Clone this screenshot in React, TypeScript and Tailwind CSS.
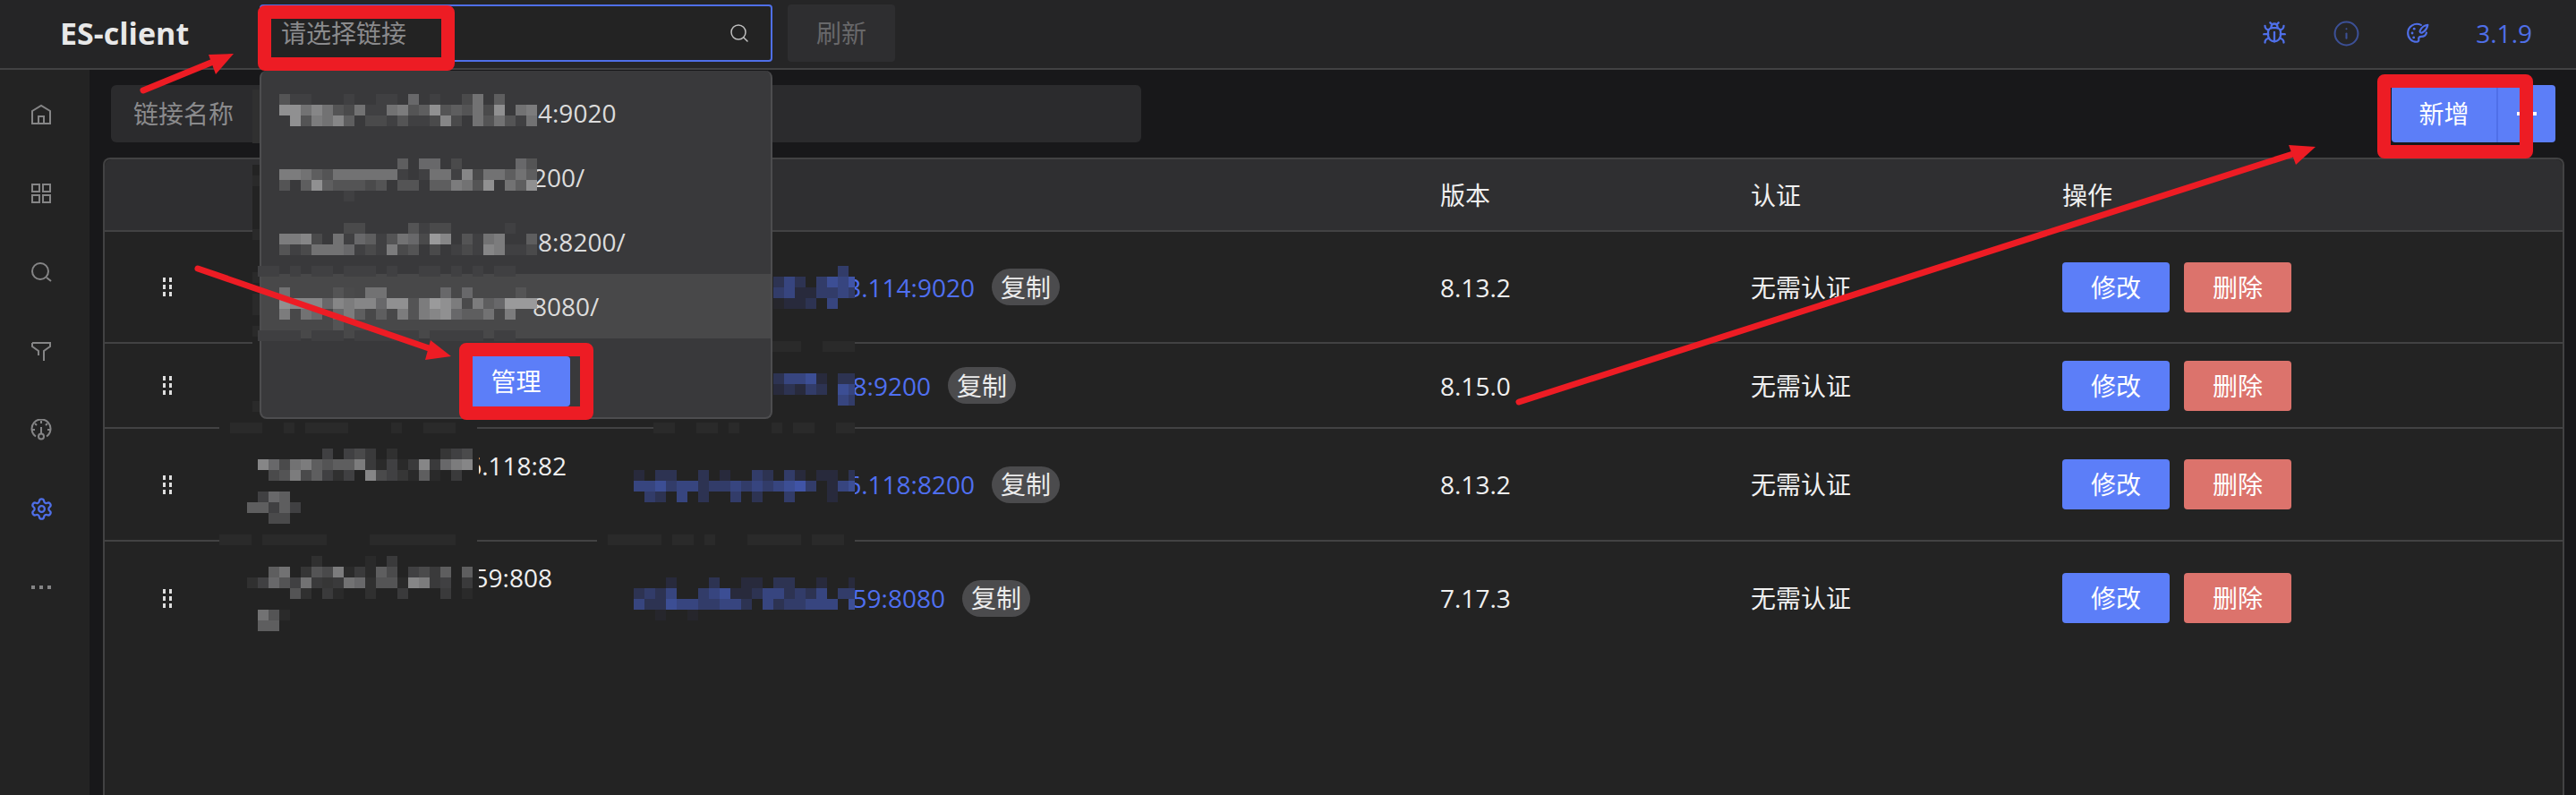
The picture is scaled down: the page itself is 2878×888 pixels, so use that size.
import { Bug, Info, Search, Settings } from "lucide-react";

const GRAYS: Record<string, string> = {
  "0": "#404042", "1": "#4a4a4b", "2": "#545455", "3": "#5e5e5f", "4": "#68686a",
  "5": "#727273", "6": "#7c7c7d", "7": "#868687", "8": "#909091", "9": "#9a9a9b",
  a: "#2a2a2a", b: "#303030", c: "#363636", d: "#3a3a3b", e: "#232323", f: "#3f3f41",
};
const BLUES: Record<string, string> = {
  a: "#26262c", "1": "#282a3c", "2": "#2d3352", "3": "#323c69", "4": "#37457f", "5": "#3c4e94", "6": "#4054a6",
};

type Patch = { x: number; y: number; rows: string[]; blue?: boolean; clip?: number };

// blurred bits that sit over the table
const TABLE_PATCHES: Patch[] = [
  { x: 282, y: 100, rows: ["b", "b", "b", "b", "b", "", "", "e", "a", "e", "e", "e", "e", "a", "e", "e", "e", "a", "e", "a", "a", "e", "a", "e", "e", "e", "e", "e", "e", "a", "e"] },
  { x: 245, y: 472, rows: ["eaaaeeaeaaaaeeeeaeeaaaee"] },
  { x: 730, y: 472, rows: ["aaeeaaeaeeeaeaaeeaa"], clip: 225 },
  { x: 245, y: 597, rows: ["aaaeaaaaaaeeeeaaaaaaaaee"] },
  { x: 667, y: 597, rows: ["eaaaaaeaaeaeeeaaaaaeaaae"], clip: 288 },
  { x: 859, y: 381, rows: ["aaaeeaaa"] },
  // row 1 url
  { x: 864, y: 297, clip: 91, rows: ["......3", "242.3546", "34113343", "a112.4"], blue: true },
  // row 2 url
  { x: 864, y: 417, clip: 91, rows: ["24451.22", "12132.54", "......43"], blue: true },
  // row 3 url
  { x: 708, y: 525, clip: 247, rows: ["1.22..2.1..32.31.11.2", "44534423343434563.145", ".32.4.2..3.2..3...1.."], blue: true },
  // row 4 url
  { x: 708, y: 645, clip: 247, rows: ["...1...2..11.22..1..1", "2324..345112442324.33", "42254433442.4233444.5", "..a..a"], blue: true },
  // row 3 name
  { x: 276, y: 501, rows: [".......0.01d.b....c01", ".7415632336da0ad7d467", "..126130b0.710ca3a.d.", "", ".043", "33030", "..11"] },
  // row 4 name
  { x: 276, y: 621, rows: ["......b....a.d", "..35.c216ada31.01d3.3", "b04205dcd54b22a76d0.d", "....2b.da..b..d...d.a", "", ".52a", ".33"] },
];

// blurred bits inside the open dropdown
const MENU_PATCHES: Patch[] = [
  { x: 312, y: 105, rows: ["200...0..00.4.0..15.3...", "885752150056238232518.56", ".826573.110200171.525205"] },
  { x: 312, y: 177, rows: ["...........3.44.1.....42", "665325555550.05507155353", "2.38322212.22.336528.538", "......0"] },
  { x: 312, y: 249, rows: ["......11....2011.....0..", "6671.50430254197.2056..3", "2015554010612.1.01076001"] },
  { x: 288, y: 297, rows: ["00.0.00.000.0..00.0.0.00."] },
  { x: 312, y: 321, rows: ["5....21.55.....4.4....2.", "877747677488269861634999", "6.54.463.3.626784335.6..", ".....2"] },
  { x: 288, y: 369, rows: ["ffff.fff.ffffff.fffff.ff"] },
];

const ROWS = [
  { h: "h-[125px]", url: "3.114:9020", urlW: "w-[134px]", version: "8.13.2" },
  { h: "h-[95px]", url: "8:9200", urlW: "w-[85px]", version: "8.15.0" },
  { h: "h-[126px]", url: "6.118:8200", urlW: "w-[134px]", version: "8.13.2", name: "6.118:82", nameW: "w-[98px]", namePad: "pt-[20px]" },
  { h: "h-[126px]", url: "59:8080", urlW: "w-[101px]", version: "7.17.3", name: "59:808", nameW: "w-[82px]", namePad: "pt-[19px]" },
];

const MENU_ITEMS = [
  { text: "4:9020", pad: "pl-[309px]" },
  { text: "200/", pad: "pl-[303px]" },
  { text: "8:8200/", pad: "pl-[309px]" },
  { text: "8080/", pad: "pl-[303px]", hover: true },
];

const GRID = "grid grid-cols-[171px_420px_901px_347px_348px_1fr]";

function Mosaic({ x, y, rows, blue, clip }: Patch) {
  const palette = blue ? BLUES : GRAYS;
  const w = clip ?? Math.max(...rows.map((r) => r.length)) * 12;
  return (
    <svg
      className="absolute"
      style={{ left: x, top: y }}
      width={w}
      height={rows.length * 12}
      shapeRendering="crispEdges"
    >
      {rows.map((row, j) =>
        row.split("").map((c, i) =>
          palette[c] ? <rect key={`${i}-${j}`} x={i * 12} y={j * 12} width={12} height={12} fill={palette[c]} /> : null,
        ),
      )}
    </svg>
  );
}

// text whose start is hidden under the blur
function Clipped({ text, width }: { text: string; width: string }) {
  return (
    <span className={`flex justify-end overflow-hidden ${width}`}>
      <span className="shrink-0">{text}</span>
    </span>
  );
}

function HomeIcon() {
  return (
    <svg width="24" height="24" viewBox="0 0 24 24" fill="none" stroke="currentColor" strokeWidth="2">
      <path d="M2 22V8l10-6 10 6v14H2Z" />
      <path d="M9 22v-8h6v8" />
    </svg>
  );
}

function GridIcon() {
  return (
    <svg width="24" height="24" viewBox="0 0 24 24" fill="none" stroke="currentColor" strokeWidth="2">
      <rect x="2" y="2" width="8" height="8" />
      <rect x="14" y="2" width="8" height="8" />
      <rect x="2" y="14" width="8" height="8" />
      <rect x="14" y="14" width="8" height="8" />
    </svg>
  );
}

function LensIcon() {
  return (
    <svg width="24" height="24" viewBox="0 0 24 24" fill="none" stroke="currentColor" strokeWidth="2">
      <circle cx="11" cy="11" r="9" />
      <path d="m18 18 5 4" />
    </svg>
  );
}

function FunnelIcon() {
  return (
    <svg width="24" height="24" viewBox="0 0 24 24" fill="none" stroke="currentColor" strokeWidth="2">
      <path d="M2 3h20v4l-7 5v11" />
      <path d="M2 3v4l7 5v5" />
    </svg>
  );
}

function GaugeIcon() {
  return (
    <svg width="24" height="24" viewBox="0 0 24 24" fill="none" stroke="currentColor" strokeWidth="2">
      <path d="M6 19.5a10.5 10.5 0 1 1 12 0" />
      <circle cx="12" cy="19.5" r="3" />
      <path d="M12 16.5V9M12 2v3M2 12h3M19 12h3M5 5l2 2M19 5l-2 2" />
    </svg>
  );
}

function BrushPalette() {
  return (
    <svg width="26" height="26" viewBox="0 0 24 24" fill="none" stroke="currentColor" strokeWidth="2" strokeLinecap="round" strokeLinejoin="round">
      <path d="M15.5 3.6A9.3 9.3 0 0 0 2 12c0 5 4 9 9 9 1.8 0 2.6-1.2 2.2-2.6-.5-1.6.6-2.8 2.4-2.8 2.6 0 5-1.4 5.6-4.1" />
      <path d="M22.5 3.5c-3.5.5-6.5 2.8-8 6-.6 1.4.8 2.7 2.2 2 3-1.5 5.2-4.5 5.8-8Z" />
      <circle cx="6.5" cy="12" r="1.3" fill="currentColor" stroke="none" />
      <circle cx="8.5" cy="7.5" r="1.3" fill="currentColor" stroke="none" />
      <circle cx="8" cy="16.5" r="1.3" fill="currentColor" stroke="none" />
    </svg>
  );
}

function Sidebar() {
  const items = [
    <HomeIcon key="home" />,
    <GridIcon key="grid" />,
    <LensIcon key="lens" />,
    <FunnelIcon key="funnel" />,
    <GaugeIcon key="gauge" />,
  ];
  return (
    <div className="w-[100px] shrink-0 bg-[#232323] pt-[6px] pr-[8px] text-[#858586]">
      {items.map((icon, i) => (
        <div key={i} className="flex h-[88px] items-center justify-center">
          {icon}
        </div>
      ))}
      <div className="flex h-[88px] items-center justify-center text-[#4f6fe8]">
        <Settings size={27} strokeWidth={2} />
      </div>
      <div className="flex h-[88px] items-center justify-center gap-[5px]">
        <span className="h-[4px] w-[4px] bg-[#858586]" />
        <span className="h-[4px] w-[4px] bg-[#858586]" />
        <span className="h-[4px] w-[4px] bg-[#858586]" />
      </div>
    </div>
  );
}

function Header() {
  return (
    <div className="flex h-[78px] shrink-0 items-center border-b-2 border-[#424243] bg-[#252526] pb-[2px]">
      <div className="w-[290px] shrink-0 pl-[67px] text-[34px] leading-none font-bold text-[#e8e8e8]">ES-client</div>
      <div className="flex h-[64px] w-[573px] items-center justify-between rounded-[4px] border-2 border-[#4f6fe8] bg-[#232323] pr-[23px] pl-[22px] text-[#8a8a8c]">
        <span>请选择链接</span>
        <Search size={24} strokeWidth={1.5} className="text-[#c0c0c0]" />
      </div>
      <div className="ml-[17px] flex h-[64px] w-[120px] items-center justify-center rounded-[4px] bg-[#2e2e30] text-[#68686a]">
        刷新
      </div>
      <div className="ml-auto flex items-center pr-[49px] text-[#4f6fe8]">
        <span className="flex w-[80px] justify-center">
          <Bug size={28} strokeWidth={2} />
        </span>
        <span className="flex w-[80px] justify-center text-[#3c5096]">
          <Info size={31} strokeWidth={1.6} />
        </span>
        <span className="flex w-[80px] justify-center">
          <BrushPalette />
        </span>
        <span className="ml-[25px]">3.1.9</span>
      </div>
    </div>
  );
}

function Toolbar() {
  return (
    <div className="flex justify-between pr-[10px] pl-[9px]">
      <div className="flex h-[64px] w-[1151px] items-center rounded-[6px] bg-[#2b2b2d] pl-[25px] text-[#8a8a8c]">
        链接名称
      </div>
      <div className="flex h-[64px] w-[183px] overflow-hidden rounded-[4px] bg-[#5c7ef8] text-white">
        <div className="flex w-[119px] items-center justify-center border-r-2 border-[#4f6fe8]">新增</div>
        <div className="flex flex-1 items-center justify-center gap-[5px]">
          <span className="h-[4px] w-[4px] bg-white" />
          <span className="h-[4px] w-[4px] bg-white" />
          <span className="h-[4px] w-[4px] bg-white" />
        </div>
      </div>
    </div>
  );
}

function DragHandle() {
  return (
    <div className="ml-[65px] grid w-[10px] grid-cols-2 justify-between gap-y-[3px]">
      {[0, 1, 2, 3, 4, 5].map((i) => (
        <span key={i} className={`h-[5px] w-[3px] bg-[#dedede] ${i % 2 ? "justify-self-end" : ""}`} />
      ))}
    </div>
  );
}

function Table() {
  return (
    <div className="mt-[17px] flex-1 rounded-t-[8px] border-x-2 border-t-2 border-[#424243] bg-[#232323] text-[#f0f0f0]">
      <div className={`${GRID} h-[81px] items-center rounded-t-[8px] border-b-2 border-[#424243] bg-[#2f2f31]`}>
        <div />
        <div />
        <div />
        <div>版本</div>
        <div>认证</div>
        <div>操作</div>
      </div>
      {ROWS.map((row, i) => (
        <div key={i} className={`${GRID} ${row.h} items-center ${i < 3 ? "border-b-2 border-[#424243]" : ""}`}>
          <DragHandle />
          <div className={`self-start pl-[247px] ${row.namePad ?? ""}`}>
            {row.name && <Clipped text={row.name} width={row.nameW ?? ""} />}
          </div>
          <div className="flex items-center pl-[247px] text-[#4f6ff0]">
            <Clipped text={row.url} width={row.urlW} />
            <span className="ml-[19px] flex h-[41px] w-[76px] items-center justify-center rounded-full bg-[#4b4b4d] text-[#ececec]">
              复制
            </span>
          </div>
          <div>{row.version}</div>
          <div>无需认证</div>
          <div className="flex gap-[16px] text-white">
            <button className="h-[56px] w-[120px] rounded-[4px] bg-[#5c7ef8]">修改</button>
            <button className="h-[56px] w-[120px] rounded-[4px] bg-[#dc736c]">删除</button>
          </div>
        </div>
      ))}
    </div>
  );
}

function Dropdown() {
  return (
    <div className="absolute top-[79px] left-[290px] h-[389px] w-[573px] rounded-[8px] border-2 border-t-0 border-[#4d4d4f] bg-[#39393b] pt-[11px] text-[#dcdcdc]">
      {MENU_ITEMS.map((item) => (
        <div
          key={item.text}
          className={`flex h-[72px] items-center ${item.pad} ${item.hover ? "bg-[#484849]" : ""}`}
        >
          {item.text}
        </div>
      ))}
      <div className="flex justify-center pt-[20px]">
        <button className="h-[56px] w-[120px] rounded-[4px] bg-[#5c7ef8] text-white">管理</button>
      </div>
    </div>
  );
}

function Arrows() {
  return (
    <svg className="pointer-events-none absolute top-0 left-0" width="2878" height="888" fill="#ed1c24">
      <path d="M160 101 243 67" stroke="#ed1c24" strokeWidth="7" strokeLinecap="round" />
      <polygon points="261,60 233,61 241,83" />
      <path d="M221 300 485 391" stroke="#ed1c24" strokeWidth="7" strokeLinecap="round" />
      <polygon points="504,398 481,380 475,402" />
      <path d="M1697 449 2565 171" stroke="#ed1c24" strokeWidth="7" strokeLinecap="round" />
      <polygon points="2587,164 2557,162 2565,184" />
    </svg>
  );
}

function RedBoxes() {
  return (
    <>
      <div className="absolute top-[6px] left-[288px] h-[73px] w-[220px] rounded-[8px] border-[15px] border-[#ed1c24]" />
      <div className="absolute top-[383px] left-[513px] h-[86px] w-[150px] rounded-[8px] border-[15px] border-[#ed1c24]" />
      <div className="absolute top-[83px] left-[2656px] h-[94px] w-[174px] rounded-[8px] border-[15px] border-[#ed1c24]" />
    </>
  );
}

export default function App() {
  return (
    <div className="relative flex h-[888px] w-[2878px] flex-col overflow-hidden bg-[#18181a] font-['Open_Sans','Noto_Sans_CJK_SC',sans-serif] text-[28px]">
      <Header />
      <div className="flex min-h-0 flex-1">
        <Sidebar />
        <div className="flex min-w-0 flex-1 flex-col pt-[17px] pr-[13px] pl-[15px]">
          <Toolbar />
          <Table />
        </div>
      </div>
      {TABLE_PATCHES.map((p) => (
        <Mosaic key={`${p.x}-${p.y}`} {...p} />
      ))}
      <Dropdown />
      {MENU_PATCHES.map((p) => (
        <Mosaic key={`${p.x}-${p.y}`} {...p} />
      ))}
      <Arrows />
      <RedBoxes />
    </div>
  );
}
